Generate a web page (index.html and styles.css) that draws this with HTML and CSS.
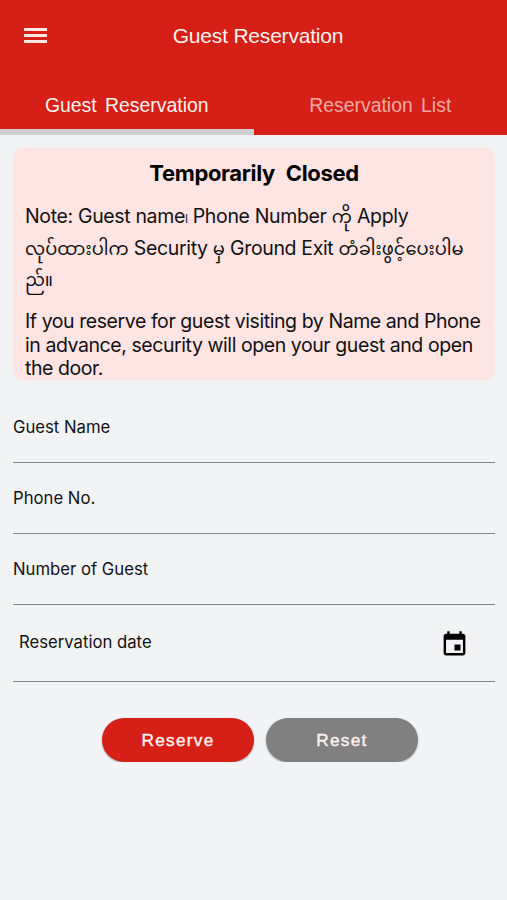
FILE: index.html
```html
<!DOCTYPE html>
<html lang="en">
<head>
    <meta charset="UTF-8">
    <meta name="viewport" content="width=device-width, initial-scale=1.0">
    <title>Guest Reservation</title>
    <link rel="stylesheet" href="styles.css">
</head>
<body>
    <header class="header">
        <div class="top-bar">
            <button class="menu-button" aria-label="Menu">
                <span class="menu-line"></span>
                <span class="menu-line"></span>
                <span class="menu-line"></span>
            </button>
            <h1 class="page-title">Guest Reservation</h1>
        </div>
        <nav class="tabs">
            <a class="tab tab-active">Guest Reservation</a>
            <a class="tab">Reservation List</a>
        </nav>
    </header>

    <main class="content">
        <section class="notice">
            <h2 class="notice-title">Temporarily Closed</h2>
            <p class="notice-myanmar">Note: Guest name၊ Phone Number <span class="mm">ကို</span> Apply<br><span class="mm">လုပ်ထားပါက</span> Security <span class="mm">မှ</span> Ground Exit <span class="mm">တံခါးဖွင့်ပေးပါမ</span><br><span class="mm">ည်။</span></p>
            <p class="notice-english">If you reserve for guest visiting by Name and Phone<br>in advance, security will open your guest and open<br>the door.</p>
        </section>

        <form class="form">
            <div class="field"><label>Guest Name</label></div>
            <div class="field"><label>Phone No.</label></div>
            <div class="field"><label>Number of Guest</label></div>
            <div class="field date-field">
                <label>Reservation date</label>
                <svg class="calendar-icon" viewBox="0 0 24 24" width="29" height="29">
                    <path d="M17 12h-5v5h5v-5zM16 1v2H8V1H6v2H5c-1.11 0-1.99.9-1.99 2L3 19c0 1.1.89 2 2 2h14c1.1 0 2-.9 2-2V5c0-1.1-.9-2-2-2h-1V1h-2zm3 18H5V8h14v11z"/>
                </svg>
            </div>
            <div class="buttons">
                <button type="button" class="button reserve-button">Reserve</button>
                <button type="button" class="button reset-button">Reset</button>
            </div>
        </form>
    </main>
</body>
</html>
```
FILE: styles.css
```css
body {
  margin: 0;
  background-color: #f1f3f5;
  color: #111;
  font-family: Inter, "Noto Sans", sans-serif;
}
.header {
  height: 135px;
  background-color: #d61f16;
  color: #fff2ee;
  font-family: "Liberation Sans", Arial, sans-serif;
}
.top-bar {
  display: grid;
  grid-template-columns: 70px 1fr 61px;
  align-items: center;
  height: 71px;
}
.menu-button {
  display: flex;
  flex-direction: column;
  gap: 3.5px;
  width: 23px;
  margin: 0 0 0 24px;
  padding: 0;
  border: none;
  background: transparent;
  cursor: pointer;
}
.menu-line {
  height: 2.7px;
  background-color: #ffe8e4;
}
.page-title {
  margin: 0;
  font-size: 21px;
  font-weight: normal;
  letter-spacing: -0.2px;
  text-align: center;
}
.tabs {
  display: grid;
  grid-template-columns: 1fr 1fr;
  height: 64px;
}
.tab {
  box-sizing: border-box;
  padding-top: 23px;
  border-bottom: 6px solid transparent;
  color: #ecaaa5;
  font-size: 19.4px;
  line-height: 23px;
  text-align: center;
  word-spacing: 3px;
}
.tab-active {
  color: #fff2ee;
  border-bottom-color: #cfcfcf;
}
.content {
  padding: 13px 12px 0 13px;
}
.notice {
  box-sizing: border-box;
  height: 232px;
  padding: 12px 12px 0;
  border-radius: 10px;
  background-color: #ffe4e4;
  white-space: nowrap;
}
.notice-title {
  margin: 0;
  font-size: 22px;
  line-height: 26px;
  letter-spacing: -0.35px;
  color: #000;
  text-align: center;
  word-spacing: 6px;
}
.notice-myanmar {
  height: 95px;
  margin: 15px 0 0;
  font-size: 19.5px;
  line-height: 31.5px;
  letter-spacing: -0.35px;
}
.notice-english {
  margin: 14px 0 0;
  font-size: 19.5px;
  line-height: 23.5px;
  letter-spacing: -0.43px;
}
.mm {
  font-family: "Noto Sans Myanmar", "Noto Sans", sans-serif;
  font-size: 17.9px;
  line-height: 0;
  letter-spacing: 0;
}
.form {
  margin-top: 12px;
}
.field {
  box-sizing: border-box;
  height: 71px;
  padding-top: 25px;
  border-bottom: 1.5px solid #85878a;
  font-size: 16.7px;
  line-height: 20px;
}
.date-field {
  display: flex;
  justify-content: space-between;
  height: 77px;
  padding: 27px 26px 0 6px;
}
.calendar-icon {
  margin-top: -2px;
  fill: #000;
}
.buttons {
  display: flex;
  justify-content: center;
  gap: 12px;
  margin-top: 36px;
  padding-left: 12px;
}
.button {
  width: 152px;
  height: 43.5px;
  padding: 2px 0 0;
  border: none;
  border-radius: 22px;
  color: #fff2f0;
  font-family: "Liberation Sans", Arial, sans-serif;
  font-size: 17.2px;
  letter-spacing: 1.3px;
  -webkit-text-stroke: 0.4px #fff2f0;
  box-shadow: 0 1px 2px rgba(0, 0, 0, 0.3);
  cursor: pointer;
}
.reserve-button {
  background-color: #d61f16;
}
.reset-button {
  background-color: #808080;
}
```
